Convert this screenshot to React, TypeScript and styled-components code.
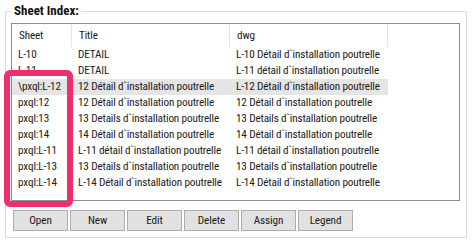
import React from "react";
import styled, { createGlobalStyle } from "styled-components";

const Global = createGlobalStyle`
  html, body { margin: 0; padding: 0; background: #ffffff; }
  body { font-family: "Roboto Condensed", "Liberation Sans", sans-serif; color: #1b1b1b; }
`;

const Page = styled.div`
  width: 474px;
  height: 244px;
  padding: 3px 0 0 5px;
  box-sizing: border-box;
  position: relative;
`;

const Group = styled.fieldset`
  margin: 0;
  width: 462px;
  box-sizing: border-box;
  border: 1px solid #dcdcdc;
  padding: 4px 6px 6px 5px;
  min-width: 0;
`;

const Legend = styled.legend`
  font-weight: bold;
  font-size: 13px;
  line-height: 16px;
  padding: 0 2px;
  margin-left: 1px;
  color: #111;
`;

const List = styled.div`
  height: 178px;
  border: 1px solid #8c8c8c;
  box-sizing: border-box;
  background: #fff;
  overflow: hidden;
`;

const cols = "60px 158px 158px 1fr";

const textStyle = `
  font-size: 11.2px;
  letter-spacing: -0.15px;
  white-space: nowrap;
  overflow: hidden;
`;

const HeaderRow = styled.div`
  display: grid;
  grid-template-columns: ${cols};
  height: 23px;
`;

const HeadCell = styled.div`
  ${textStyle}
  line-height: 23px;
  padding-left: 7px;
  border-right: 1px solid #e5e5e5;
  &:last-child { border-right: none; }
`;

const Row = styled.div<{ $selected?: boolean }>`
  display: grid;
  grid-template-columns: ${cols};
  height: 16px;
  & > div:not(:last-child) {
    background: ${(p) => (p.$selected ? "#e5e5e5" : "transparent")};
  }
`;

const Cell = styled.div`
  ${textStyle}
  line-height: 16px;
  padding-left: 6px;
`;

const Buttons = styled.div`
  display: flex;
  gap: 2px;
  margin-top: 9px;
  padding-left: 2px;
`;

const Button = styled.button`
  width: 55px;
  height: 21px;
  box-sizing: border-box;
  border: 1px solid #adadad;
  background: #e1e1e1;
  font-family: "Roboto Condensed", "Liberation Sans", sans-serif;
  font-size: 11.2px;
  letter-spacing: -0.1px;
  color: #1b1b1b;
  padding: 0;
`;

const Highlight = styled.div`
  position: absolute;
  left: 4px;
  top: 70px;
  width: 69px;
  height: 137px;
  box-sizing: border-box;
  border: 6px solid #ef2f6c;
  border-radius: 6px;
  pointer-events: none;
`;

const rows: [string, string, string][] = [
  ["L-10", "DETAIL", "L-10 Détail d`installation poutrelle"],
  ["L-11", "DETAIL", "L-11 détail d`installation poutrelle"],
  ["\\pxql:L-12", "12 Détail d`installation poutrelle", "L-12 Détail d`installation poutrelle"],
  ["pxql:12", "12 Détail d`installation poutrelle", "12 Détail d`installation poutrelle"],
  ["pxql:13", "13 Details d`installation poutrelle", "13 Details d`installation poutrelle"],
  ["pxql:14", "14 Détail d`installation poutrelle", "14 Détail d`installation poutrelle"],
  ["pxql:L-11", "L-11 détail d`installation poutrelle", "L-11 détail d`installation poutrelle"],
  ["pxql:L-13", "13 Details d`installation poutrelle", "13 Details d`installation poutrelle"],
  ["pxql:L-14", "L-14 Détail d`installation poutrelle", "L-14 Détail d`installation poutrelle"],
];

export default function App() {
  return (
    <>
      <Global />
      <Page>
        <Group>
          <Legend>Sheet Index:</Legend>
          <List>
            <HeaderRow>
              <HeadCell>Sheet</HeadCell>
              <HeadCell>Title</HeadCell>
              <HeadCell>dwg</HeadCell>
              <HeadCell />
            </HeaderRow>
            {rows.map((r, i) => (
              <Row key={i} $selected={i === 2}>
                <Cell>{r[0]}</Cell>
                <Cell>{r[1]}</Cell>
                <Cell>{r[2]}</Cell>
                <Cell />
              </Row>
            ))}
          </List>
          <Buttons>
            {["Open", "New", "Edit", "Delete", "Assign", "Legend"].map((b) => (
              <Button key={b}>{b}</Button>
            ))}
          </Buttons>
        </Group>
        <Highlight />
      </Page>
    </>
  );
}
